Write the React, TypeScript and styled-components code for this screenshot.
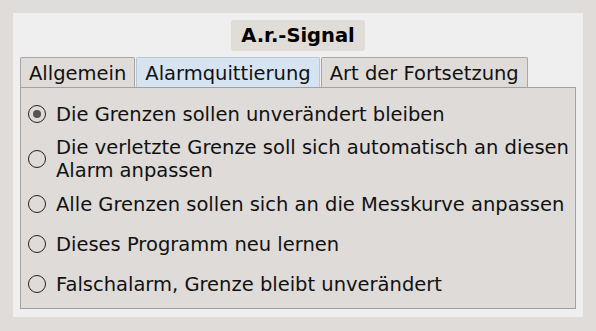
import styled, { createGlobalStyle } from "styled-components"

const Global = createGlobalStyle`
  html, body {
    margin: 0;
    padding: 0;
    background: #dfdcd9;
  }
  body {
    font-family: "DejaVu Sans", "Liberation Sans", sans-serif;
    color: #111;
  }
`

const options = [
  "Die Grenzen sollen unverändert bleiben",
  "Die verletzte Grenze soll sich automatisch an diesen Alarm anpassen",
  "Alle Grenzen sollen sich an die Messkurve anpassen",
  "Dieses Programm neu lernen",
  "Falschalarm, Grenze bleibt unverändert",
]

const tabs = ["Allgemein", "Alarmquittierung", "Art der Fortsetzung"]

function App() {
  return (
    <>
      <Global />
      <Page>
        <Panel>
          <TitleRow>
            <Title>A.r.-Signal</Title>
          </TitleRow>
          <TabBar>
            {tabs.map((t, i) => (
              <Tab key={t} $active={i === 1}>
                {t}
              </Tab>
            ))}
          </TabBar>
          <Pane>
            {options.map((o, i) => (
              <Option key={o}>
                <Radio $checked={i === 0} />
                <Label>{o}</Label>
              </Option>
            ))}
          </Pane>
        </Panel>
      </Page>
    </>
  )
}

export default App

const Page = styled.div`
  width: 596px;
  height: 331px;
  padding: 13px;
  box-sizing: border-box;
`

const Panel = styled.div`
  width: 570px;
  height: 304px;
  box-sizing: border-box;
  background: #efefef;
  padding: 7px 7px 8px 7px;
  display: flex;
  flex-direction: column;
`

const TitleRow = styled.div`
  display: flex;
  justify-content: center;
  margin-bottom: 6px;
`

const Title = styled.div`
  height: 31px;
  width: 134px;
  display: flex;
  align-items: center;
  justify-content: center;
  background: #e0dcd8;
  border-radius: 3px;
  font-weight: bold;
  font-size: 19.5px;
  color: #000;
`

const TabBar = styled.div`
  display: flex;
  gap: 1px;
  height: 30px;
`

const Tab = styled.div<{ $active?: boolean }>`
  box-sizing: border-box;
  height: 30px;
  padding: 1px 8px 0 8px;
  display: flex;
  align-items: center;
  font-size: 19.5px;
  white-space: nowrap;
  border: 1px solid ${(p) => (p.$active ? "#b9c7d6" : "#a9a6a4")};
  border-bottom: none;
  border-radius: 2px 2px 0 0;
  background: ${(p) => (p.$active ? "#d6e4f1" : "#dfdbd8")};
`

const Pane = styled.div`
  flex: 1;
  width: 556px;
  box-sizing: border-box;
  border: 1px solid #a3a09e;
  background: #dfdbd8;
  padding: 6px 0 0 7px;
  display: flex;
  flex-direction: column;
`

const Option = styled.div`
  min-height: 40px;
  padding: 2px 0;
  box-sizing: border-box;
  display: flex;
  align-items: center;
  gap: 10px;
`

const Radio = styled.span<{ $checked?: boolean }>`
  flex: none;
  width: 18px;
  height: 18px;
  box-sizing: border-box;
  border: 1.5px solid #222;
  border-radius: 50%;
  display: flex;
  align-items: center;
  justify-content: center;
  &::after {
    content: "";
    width: 8px;
    height: 8px;
    border-radius: 50%;
    background: ${(p) => (p.$checked ? "#555" : "transparent")};
  }
`

const Label = styled.span`
  font-size: 19.5px;
  line-height: 23px;
`
